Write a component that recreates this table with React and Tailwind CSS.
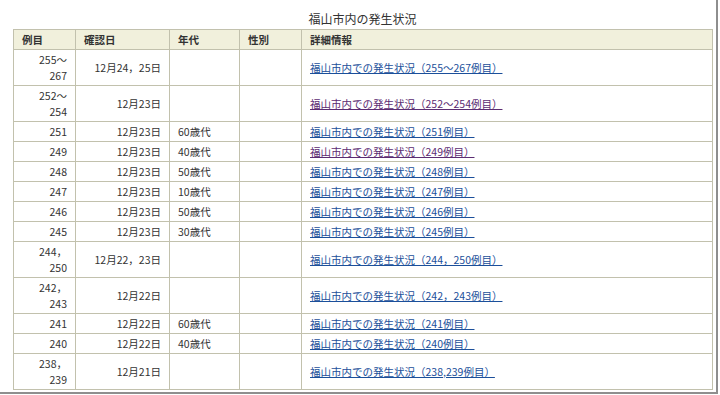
import React from 'react';

const rows = [
  { no: ['255～', '267'], date: '12月24，25日', age: '', link: '福山市内での発生状況（255～267例目）' },
  { no: ['252～', '254'], date: '12月23日', age: '', link: '福山市内での発生状況（252～254例目）', visited: true },
  { no: ['251'], date: '12月23日', age: '60歳代', link: '福山市内での発生状況（251例目）' },
  { no: ['249'], date: '12月23日', age: '40歳代', link: '福山市内での発生状況（249例目）', visited: true },
  { no: ['248'], date: '12月23日', age: '50歳代', link: '福山市内での発生状況（248例目）' },
  { no: ['247'], date: '12月23日', age: '10歳代', link: '福山市内での発生状況（247例目）' },
  { no: ['246'], date: '12月23日', age: '50歳代', link: '福山市内での発生状況（246例目）' },
  { no: ['245'], date: '12月23日', age: '30歳代', link: '福山市内での発生状況（245例目）' },
  { no: ['244，', '250'], date: '12月22，23日', age: '', link: '福山市内での発生状況（244，250例目）' },
  { no: ['242，', '243'], date: '12月22日', age: '', link: '福山市内での発生状況（242，243例目）' },
  { no: ['241'], date: '12月22日', age: '60歳代', link: '福山市内での発生状況（241例目）' },
  { no: ['240'], date: '12月22日', age: '40歳代', link: '福山市内での発生状況（240例目）' },
  { no: ['238，', '239'], date: '12月21日', age: '', link: '福山市内での発生状況（238,239例目）' },
];

const cell = 'border border-[#c2c1ad] pt-[2px] pb-[1px] px-[8px] leading-[16px] align-middle';

export default function App() {
  return (
    <div className="w-[720px] h-[395px] bg-white overflow-hidden" style={{ fontFamily: '"Noto Sans CJK JP", "Noto Sans", sans-serif' }}>
      <div className="w-[718px] h-[394px] border-r-2 border-b-2 border-[#8e8e8e]">
        <div className="ml-[13px] w-[699px]">
          {/* Caption */}
          <div className="h-[29px] pt-[11px] text-center text-[12px] leading-[16px] text-[#333]">
            福山市内の発生状況
          </div>

          <table className="w-[699px] table-fixed border-collapse text-[10.5px] text-[#333]">
            <colgroup>
              <col className="w-[62px]" />
              <col className="w-[94px]" />
              <col className="w-[70px]" />
              <col className="w-[62px]" />
              <col className="w-[411px]" />
            </colgroup>
            <thead>
              <tr className="bg-[#f1f0dc]">
                <th className={`${cell} text-left font-bold`}>例目</th>
                <th className={`${cell} text-left font-bold`}>確認日</th>
                <th className={`${cell} text-left font-bold`}>年代</th>
                <th className={`${cell} text-left font-bold`}>性別</th>
                <th className={`${cell} text-left font-bold`}>詳細情報</th>
              </tr>
            </thead>
            <tbody>
              {rows.map((r, i) => (
                <tr key={i}>
                  <td className={`${cell} text-right`}>
                    {r.no.map((n, j) => (
                      <div key={j}>{n}</div>
                    ))}
                  </td>
                  <td className={`${cell} text-right`}>{r.date}</td>
                  <td className={`${cell} text-left`}>{r.age}</td>
                  <td className={cell}></td>
                  <td className={cell}>
                    <a
                      href="#"
                      className={`underline ${r.visited ? 'text-[#5b2c72]' : 'text-[#1b4f9a]'}`}
                    >
                      {r.link}
                    </a>
                  </td>
                </tr>
              ))}
            </tbody>
          </table>
        </div>
      </div>
    </div>
  );
}
